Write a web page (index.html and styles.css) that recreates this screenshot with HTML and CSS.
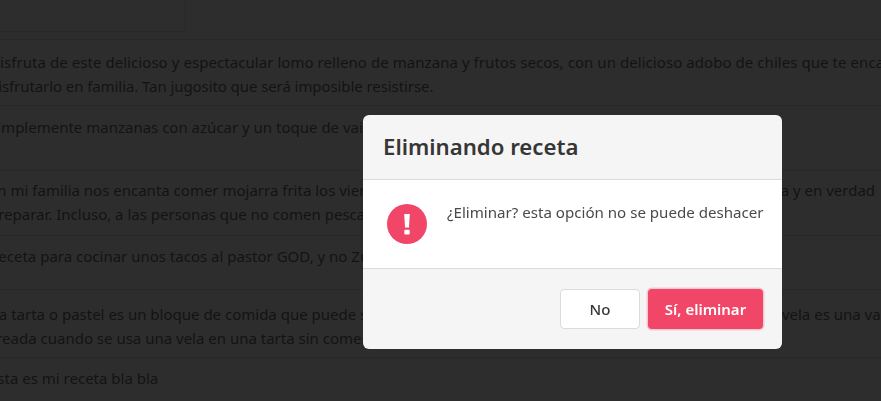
FILE: index.html
```html
<!DOCTYPE html>
<html lang="es">
<head>
<meta charset="utf-8">
<title>Recetas</title>
<link rel="stylesheet" href="styles.css">
</head>
<body>
<main class="page">
  <div class="search-box"></div>
  <section class="recipes">
    <div class="row row-1"><p class="wide">Disfruta de este delicioso y espectacular lomo relleno de manzana y frutos secos, con un delicioso adobo de chiles que te encantará</p><p class="tight">disfrutarlo en familia. Tan jugosito que será imposible resistirse.</p></div>
    <div class="row row-2"><p>Simplemente manzanas con azúcar y un toque de vainilla para disfrutar</p></div>
    <div class="row row-3"><p>En mi familia nos encanta comer mojarra frita los viernes<span class="gap gap-3"></span>ta y en verdad</p><p>preparar. Incluso, a las personas que no comen pescado les encanta</p></div>
    <div class="row row-4"><p>Receta para cocinar unos tacos al pastor GOD, y no Zuckerberg</p></div>
    <div class="row row-5"><p>La tarta o pastel es un bloque de comida que puede ser<span class="gap gap-5"></span>vela es una vaca</p><p>creada cuando se usa una vela en una tarta sin comer nada</p></div>
    <div class="row row-6"><p>Esta es mi receta bla bla</p></div>
  </section>
</main>
<div class="overlay">
  <div class="modal">
    <header class="modal-head"><h2>Eliminando receta</h2></header>
    <div class="modal-body">
      <svg class="alert-icon" viewBox="0 0 40 40" aria-hidden="true">
        <circle cx="20" cy="20" r="20" fill="#f14668"/>
        <path d="M17.2 10h5.6l-.8 13.6h-4z" fill="#fff"/>
        <rect x="17.3" y="25.8" width="5.4" height="4.6" rx="1" fill="#fff"/>
      </svg>
      <p>¿Eliminar? esta opción no se puede deshacer</p>
    </div>
    <footer class="modal-foot">
      <button class="btn btn-light">No</button>
      <button class="btn btn-danger">Sí, eliminar</button>
    </footer>
  </div>
</div>
</body>
</html>
```
FILE: styles.css
```css
* { box-sizing: border-box; margin: 0; padding: 0; }

html, body {
  width: 881px;
  height: 401px;
  overflow: hidden;
  background: #fff;
  font-family: "Noto Sans", "Open Sans", sans-serif;
  color: #4a4a4a;
}

.page { width: 881px; height: 401px; overflow: hidden; }

.search-box {
  width: 186px;
  height: 32px;
  border-right: 1px solid #dbdbdb;
  border-bottom: 1px solid #dbdbdb;
  margin-bottom: 7px;
}

.recipes { border-top: 1px solid #dbdbdb; }

.row {
  border-bottom: 1px solid #dbdbdb;
  margin-left: -11px;
  width: 1100px;
  font-size: 15px;
  line-height: 24px;
  white-space: nowrap;
}
.wide { letter-spacing: .06px; }
.tight { letter-spacing: -.08px; }
.row-1 { height: 66px; padding-top: 10px; }
.row-2 { height: 65px; padding-top: 9px; }
.row-3 { height: 65px; padding-top: 7px; }
.row-4 { height: 54px; padding-top: 8px; }
.row-5 { height: 68px; padding-top: 12px; }
.row-5 p:first-child { margin-left: 2px; }
.row-6 { height: 50px; padding-top: 8px; border-bottom: 0; }

.gap { display: inline-block; }
.gap-3 { width: 385px; }
.gap-5 { width: 400px; }

.overlay {
  position: fixed;
  inset: 0;
  background: rgba(10, 10, 10, .86);
  padding: 115px 0 0 363px;
}

.modal {
  width: 419px;
  height: 234px;
  border-radius: 6px;
  overflow: hidden;
  display: flex;
  flex-direction: column;
}

.modal-head {
  height: 65px;
  background: #f5f5f5;
  border-bottom: 1px solid #dbdbdb;
  padding: 1px 20px 0;
  display: flex;
  align-items: center;
}
.modal-head h2 { font-size: 22.2px; font-weight: 600; color: #363636; line-height: 1; }

.modal-body {
  height: 88px;
  background: #fff;
  padding: 20px 18px 0 24px;
  display: flex;
  gap: 20px;
  font-size: 15.1px;
  line-height: 24px;
}
.modal-body p { white-space: nowrap; }
.alert-icon { width: 40px; height: 40px; flex: none; margin-top: 4px; }

.modal-foot {
  flex: 1;
  background: #f5f5f5;
  border-top: 1px solid #dbdbdb;
  padding: 20px 19px 0 0;
  display: flex;
  justify-content: flex-end;
  gap: 8px;
}

.btn {
  height: 40px;
  border-radius: 4px;
  font: inherit;
  font-size: 15px;
  line-height: 1;
}
.btn-light { width: 80px; background: #fff; border: 1px solid #dbdbdb; color: #363636; font-weight: 500; }
.btn-danger {
  width: 115px;
  background: #f14668;
  border: 0;
  color: #fff;
  font-weight: 600;
  box-shadow: 0 0 0 1.5px rgba(241, 70, 104, .25);
}
```
